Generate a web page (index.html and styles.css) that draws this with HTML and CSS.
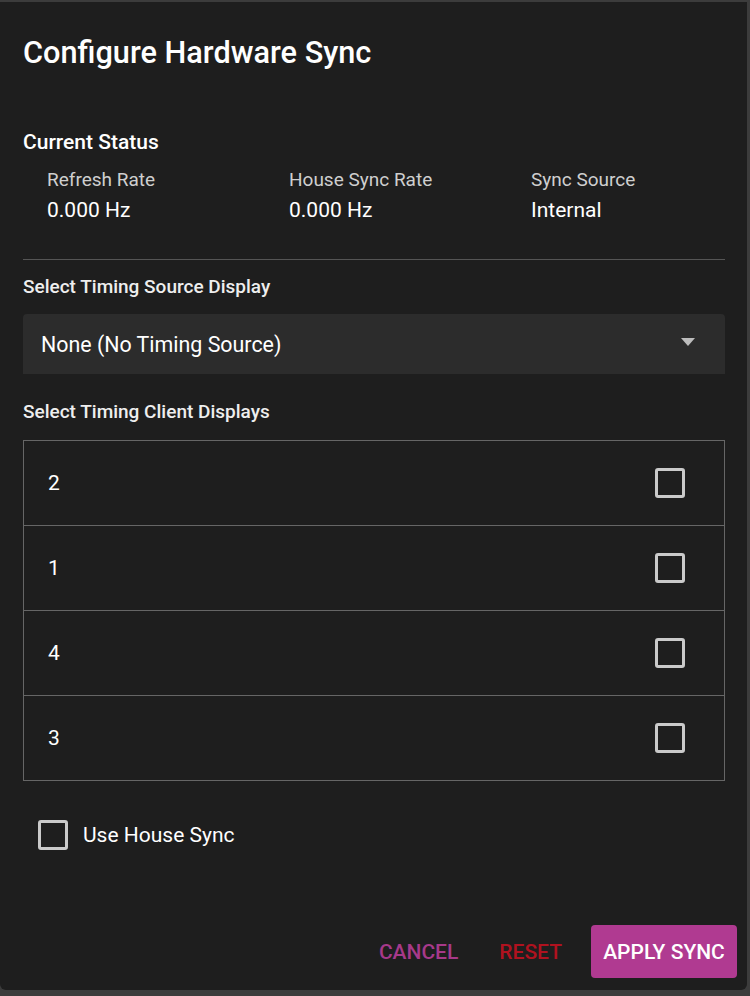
FILE: index.html
```html
<!DOCTYPE html>
<html>
<head>
<meta charset="utf-8">
<link rel="stylesheet" href="styles.css">
</head>
<body>
<div class="dialog">
  <h1 class="title">Configure Hardware Sync</h1>
  <div class="content">
    <h2 class="section">Current Status</h2>
    <div class="status">
      <div class="stat"><div class="stat-label">Refresh Rate</div><div class="stat-value">0.000 Hz</div></div>
      <div class="stat"><div class="stat-label">House Sync Rate</div><div class="stat-value">0.000 Hz</div></div>
      <div class="stat"><div class="stat-label">Sync Source</div><div class="stat-value">Internal</div></div>
    </div>
    <hr class="divider">
    <div class="field-label">Select Timing Source Display</div>
    <div class="select">
      <span>None (No Timing Source)</span>
      <svg class="arrow" width="14" height="8" viewBox="0 0 14 8"><path d="M0 0h14L7 8z" fill="#bdbdbd"/></svg>
    </div>
    <div class="field-label second">Select Timing Client Displays</div>
    <div class="list">
      <div class="row"><span>2</span><span class="box"></span></div>
      <div class="row"><span>1</span><span class="box"></span></div>
      <div class="row"><span>4</span><span class="box"></span></div>
      <div class="row"><span>3</span><span class="box"></span></div>
    </div>
    <label class="house"><span class="box"></span><span>Use House Sync</span></label>
  </div>
  <div class="actions">
    <button class="btn cancel">CANCEL</button>
    <button class="btn reset">RESET</button>
    <button class="btn apply">APPLY SYNC</button>
  </div>
</div>
</body>
</html>
```
FILE: styles.css
```css
* { box-sizing: border-box; }
html, body { margin: 0; padding: 0; }
body {
  background: #3c3c3c;
  width: 750px;
  height: 996px;
  overflow: hidden;
  font-family: Roboto, "Liberation Sans", sans-serif;
  color: #fff;
}
.dialog {
  margin-top: 2px;
  width: 747px;
  height: 988px;
  background: #1e1e1e;
  border-radius: 0 0 6px 6px;
  display: flex;
  flex-direction: column;
}
.title {
  margin: 0;
  padding: 34px 23px 0;
  font-size: 30.7px;
  font-weight: 500;
  line-height: 34px;
}
.content {
  padding: 0 23px 0 23px;
  flex: 1;
}
.section {
  margin: 58px 0 0;
  font-size: 21px;
  font-weight: 500;
  line-height: 28px;
}
.status {
  display: grid;
  grid-template-columns: 242px 242px 1fr;
  padding-left: 24px;
  margin-top: 12px;
}
.stat-label {
  font-size: 19px;
  color: #cfcfcf;
  line-height: 24px;
}
.stat-value {
  font-size: 21px;
  line-height: 28px;
  margin-top: 4px;
}
.divider {
  border: 0;
  border-top: 1px solid #555;
  margin: 35px 0 0;
  width: 702px;
}
.field-label {
  font-size: 19px;
  font-weight: 500;
  color: #eee;
  line-height: 24px;
  margin-top: 15px;
}
.field-label.second { margin-top: 26px; }
.select {
  margin-top: 15px;
  width: 702px;
  height: 60px;
  background: #2c2c2c;
  border-radius: 4px 4px 0 0;
  display: flex;
  align-items: center;
  justify-content: space-between;
  padding: 0 30px 0 18px;
  font-size: 21.4px;
}
.arrow { display: block; margin-top: -4px; }
.list {
  margin-top: 16px;
  width: 702px;
  border: 1px solid #666;
}
.row {
  height: 85px;
  display: flex;
  align-items: center;
  justify-content: space-between;
  padding: 0 39px 0 24px;
  font-size: 21px;
  border-top: 1px solid #666;
}
.row:first-child { border-top: 0; height: 84px; }
.box {
  width: 30px;
  height: 30px;
  border: 3px solid #cacaca;
  border-radius: 3px;
  display: block;
}
.house {
  display: flex;
  align-items: center;
  gap: 15px;
  margin: 39px 0 0 15px;
  font-size: 21px;
}
.actions {
  display: flex;
  justify-content: flex-end;
  align-items: center;
  padding: 0 10px 12px 0;
}
.btn {
  font-family: Roboto, "Liberation Sans", sans-serif;
  font-size: 21px;
  font-weight: 500;
  border: 0;
  background: none;
  height: 53px;
  padding: 0 11px;
  border-radius: 4px;
  cursor: pointer;
}
.cancel { color: #a7398a; margin-right: 19px; }
.reset { color: #b0121f; margin-right: 18px; }
.apply { background: #b03a91; color: #fff; width: 146px; padding: 0; }
```
